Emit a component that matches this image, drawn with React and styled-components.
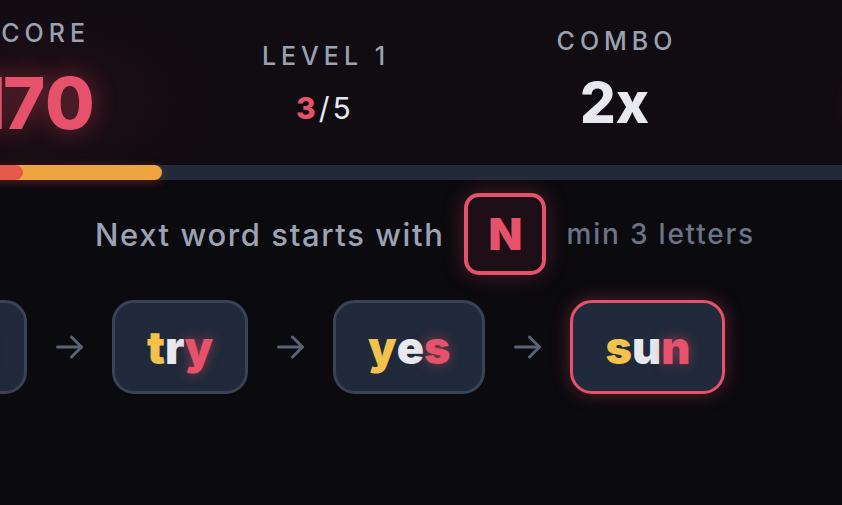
import styled, { createGlobalStyle } from "styled-components"

const GlobalStyle = createGlobalStyle`
  html, body {
    margin: 0;
    padding: 0;
    background: #0b0a0f;
  }
  body {
    font-family: Inter, "Noto Sans", "Liberation Sans", sans-serif;
  }
`

const RED = "#e6526b"
const YELLOW = "#f3c24d"
const WHITE = "#e7e9ef"

const Page = styled.div`
  width: 842px;
  height: 505px;
  overflow: hidden;
  background: #0b0a0f;
  display: flex;
  flex-direction: column;
`

const Header = styled.header`
  height: 165px;
  box-sizing: border-box;
  padding-bottom: 5px;
  background:
    radial-gradient(ellipse 260px 140px at 40px 100px, rgba(120, 20, 40, 0.16), transparent 70%),
    #110c12;
  display: flex;
  align-items: center;
`

const StatsRow = styled.div`
  display: grid;
  grid-template-columns: repeat(4, 291px);
  align-items: center;
  margin-left: -113px;
  flex-shrink: 0;
`

const Stat = styled.div`
  display: flex;
  flex-direction: column;
  align-items: center;
  padding-top: ${p => p.$shift || 0}px;
`

const Label = styled.div`
  font-size: 25px;
  font-weight: 500;
  letter-spacing: 0.2em;
  margin-right: -0.2em;
  color: #9aa1b1;
  line-height: 1;
`

const BigValue = styled.div`
  font-size: ${p => p.$size}px;
  font-weight: 800;
  line-height: 1;
  letter-spacing: ${p => p.$spacing || 0}px;
  margin-right: ${p => -(p.$spacing || 0)}px;
  margin-left: ${p => p.$nudge || 0}px;
  margin-top: ${p => p.$gap}px;
  color: ${p => p.$color};
  text-shadow: ${p => (p.$glow ? `0 0 24px rgba(230, 82, 107, 0.45)` : "none")};
`

// the "1" sits tight against the next digit
const TightDigit = styled.span`
  margin-right: -4px;
`

const Accent = styled.span`
  color: ${RED};
  font-weight: 800;
`

const Faint = styled.span`
  color: ${WHITE};
  font-weight: 400;
`

const Track = styled.div`
  height: 15px;
  margin-left: -20px;
  width: calc(100% + 40px);
  background: #222a3a;
  display: flex;
  flex-shrink: 0;
`

const Fill = styled.div`
  width: 182px;
  background: #eda63f;
  border-radius: 0 8px 8px 0;
  box-shadow: 0 2px 10px rgba(230, 70, 60, 0.35);
  display: flex;
`

const FillCap = styled.div`
  width: 43px;
  background: #e65a4c;
  border-radius: 0 8px 8px 0;
`

const HintRow = styled.div`
  margin-top: 13px;
  display: flex;
  align-items: center;
  justify-content: center;
  gap: 20px;
  padding-left: 8px;
`

const HintText = styled.span`
  font-weight: 500;
  color: ${p => p.$color};
  font-size: ${p => p.$size}px;
  letter-spacing: ${p => p.$spacing}px;
`

const LetterBox = styled.div`
  width: 82px;
  height: 82px;
  box-sizing: border-box;
  border: 4px solid ${RED};
  border-radius: 15px;
  background: #1e0f16;
  box-shadow: 0 0 22px rgba(230, 82, 107, 0.28);
  display: flex;
  align-items: center;
  justify-content: center;
  font-size: 44px;
  font-weight: 900;
  color: ${RED};
`

const ChainRow = styled.div`
  margin-top: 25px;
  margin-left: -115px;
  display: flex;
  align-items: center;
  gap: 29px;
`

const WordBox = styled.div`
  height: 94px;
  box-sizing: border-box;
  padding: 0 32px;
  border: 3px solid ${p => (p.$active ? RED : "#3a4356")};
  border-radius: 22px;
  background: #212a3a;
  box-shadow: ${p => (p.$active ? "0 0 18px rgba(230, 82, 107, 0.35)" : "none")};
  display: flex;
  align-items: center;
  font-size: 45px;
  font-weight: 900;
  flex-shrink: 0;
`

const Letter = styled.span`
  color: ${p => p.$color};
  text-shadow: ${p => (p.$glow ? "0 0 12px rgba(230, 82, 107, 0.5)" : "none")};
`

const ArrowIcon = styled.svg`
  flex-shrink: 0;
  display: block;
`

const Arrow = () => (
  <ArrowIcon width="27" height="24" viewBox="0 0 27 24" fill="none" stroke="#5a6376" strokeWidth="3" strokeLinecap="round" strokeLinejoin="round">
    <path d="M1.5 12h24" />
    <path d="M15.5 2l10 10-10 10" />
  </ArrowIcon>
)

const Word = ({ text, active }) => {
  const letters = text.split("")
  return (
    <WordBox $active={active}>
      {letters.map((ch, i) => {
        const last = i === letters.length - 1
        const color = i === 0 ? YELLOW : last ? RED : WHITE
        return (
          <Letter key={i} $color={color} $glow={last}>
            {ch}
          </Letter>
        )
      })}
    </WordBox>
  )
}

const words = ["cat", "try", "yes", "sun"]

function Chain({ word, first, active }) {
  return (
    <>
      {!first && <Arrow />}
      <Word text={word} active={active} />
    </>
  )
}

export default function App() {
  return (
    <>
      <GlobalStyle />
      <Page>
        <Header>
          <StatsRow>
            <Stat>
              <Label>SCORE</Label>
              <BigValue $size={72} $gap={21} $spacing={1} $nudge={4} $color={RED} $glow>
                <TightDigit>1</TightDigit>70
              </BigValue>
            </Stat>
            <Stat $shift={6}>
              <Label>LEVEL 1</Label>
              <BigValue $size={30} $gap={24} $spacing={3} $color={WHITE}>
                <Accent>3</Accent>
                <Faint>/5</Faint>
              </BigValue>
            </Stat>
            <Stat>
              <Label>COMBO</Label>
              <BigValue $size={56} $gap={21} $color={WHITE}>
                2x
              </BigValue>
            </Stat>
            <Stat>
              <Label>TIME</Label>
              <BigValue $size={56} $gap={21} $color={RED} $glow>
                45s
              </BigValue>
            </Stat>
          </StatsRow>
        </Header>
        <Track>
          <Fill>
            <FillCap />
          </Fill>
        </Track>
        <HintRow>
          <HintText $size={31} $spacing={1.6} $color="#9ba3b4">
            Next word starts with
          </HintText>
          <LetterBox>N</LetterBox>
          <HintText $size={28} $spacing={1.8} $color="#6b7386">
            min 3 letters
          </HintText>
        </HintRow>
        <ChainRow>
          {words.map((w, i) => (
            <Chain key={w} word={w} first={i === 0} active={i === words.length - 1} />
          ))}
        </ChainRow>
      </Page>
    </>
  )
}
